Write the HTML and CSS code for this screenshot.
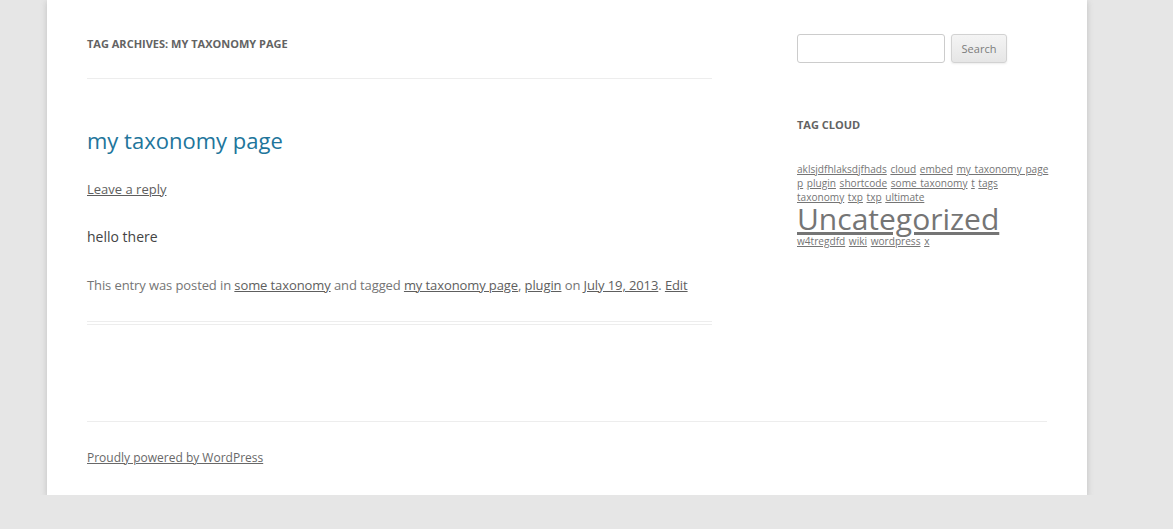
FILE: index.html
```html
<!DOCTYPE html>
<html>
<head>
<meta charset="utf-8">
<link rel="stylesheet" href="styles.css">
</head>
<body>
<div class="site">
  <div class="wrapper">
    <div class="primary">
      <header class="archive-header">
        <h1 class="archive-title">Tag Archives: <span>my taxonomy page</span></h1>
      </header>
      <article class="post">
        <header class="entry-header">
          <h1 class="entry-title"><a href="#">my taxonomy page</a></h1>
          <div class="comments-link"><a href="#">Leave a reply</a></div>
        </header>
        <div class="entry-content">
          <p>hello there</p>
        </div>
        <footer class="entry-meta">This entry was posted in <a href="#">some taxonomy</a> and tagged <a href="#">my taxonomy page</a>, <a href="#">plugin</a> on <a href="#">July 19, 2013</a>. <a href="#">Edit</a></footer>
      </article>
    </div>
    <div class="secondary">
      <aside class="widget widget-search">
        <form class="searchform">
          <input type="text" class="search-input">
          <button type="button" class="search-btn">Search</button>
        </form>
      </aside>
      <aside class="widget widget-tags">
        <h3 class="widget-title">Tag Cloud</h3>
        <div class="tagcloud">
          <a href="#">aklsjdfhlaksdjfhads</a> <a href="#">cloud</a> <a href="#">embed</a> <a href="#">my taxonomy page</a> <a href="#">p</a> <a href="#">plugin</a> <a href="#">shortcode</a> <a href="#">some taxonomy</a> <a href="#">t</a> <a href="#">tags</a><br><a href="#">taxonomy</a> <a href="#">txp</a> <a href="#">txp</a> <a href="#">ultimate</a> <a href="#" class="tag-big">Uncategorized</a> <a href="#">w4tregdfd</a> <a href="#">wiki</a> <a href="#">wordpress</a> <a href="#">x</a>
        </div>
      </aside>
    </div>
  </div>
  <footer class="site-footer">
    <a href="#">Proudly powered by WordPress</a>
  </footer>
</div>
</body>
</html>
```
FILE: styles.css
```css
html, body {
  margin: 0;
  padding: 0;
}
body {
  background: #e6e6e6;
  font-family: "Open Sans", "Liberation Sans", sans-serif;
  font-size: 14px;
  line-height: 24px;
  color: #444;
}
.site {
  margin-left: 47px;
  width: 960px;
  padding: 0 40px;
  background: #fff;
  box-shadow: 0 2px 6px rgba(100, 100, 100, 0.3);
}
.wrapper {
  display: flex;
  justify-content: space-between;
  align-items: flex-start;
}
.primary {
  width: 625px;
  padding-top: 32px;
}
.archive-header {
  margin: 0 0 48px;
  padding-bottom: 22px;
  border-bottom: 1px solid #ededed;
}
.archive-title {
  margin: 0;
  font-size: 11px;
  line-height: 24px;
  font-weight: bold;
  text-transform: uppercase;
  color: #636363;
}
.post {
  padding-bottom: 24px;
  border-bottom: 4px double #ededed;
  margin-bottom: 72px;
}
.entry-header {
  margin-bottom: 24px;
}
.entry-title {
  margin: 0;
  font-size: 22px;
  line-height: 26px;
  font-weight: normal;
}
.entry-title a {
  color: #21759b;
  text-decoration: none;
}
.comments-link {
  margin-top: 24px;
  font-size: 13px;
  line-height: 24px;
  color: #757575;
}
.comments-link a,
.entry-meta a {
  color: #5e5e5e;
  text-decoration: underline;
}
.entry-content p {
  margin: 0 0 24px;
  font-size: 14px;
  line-height: 24px;
  color: #444;
}
.entry-meta {
  font-size: 13px;
  letter-spacing: -0.1px;
  line-height: 24px;
  color: #757575;
}
.secondary {
  width: 250px;
  padding-top: 34px;
}
.widget-search {
  margin-bottom: 50px;
}
.searchform {
  display: flex;
  gap: 6px;
  margin: 0;
}
.search-input {
  box-sizing: border-box;
  width: 148px;
  height: 29px;
  padding: 6px;
  border: 1px solid #ccc;
  border-radius: 3px;
  font-family: inherit;
  font-size: 12px;
  margin: 0;
}
.search-btn {
  box-sizing: border-box;
  width: 56px;
  height: 29px;
  padding: 0;
  font-family: inherit;
  font-size: 11px;
  color: #7c7c7c;
  background: linear-gradient(to bottom, #f4f4f4, #e6e6e6);
  border: 1px solid #d2d2d2;
  border-radius: 3px;
  box-shadow: 0 1px 2px rgba(64, 64, 64, 0.1);
  margin: 0;
}
.widget-title {
  margin: 0 0 25px;
  font-size: 11px;
  line-height: 24px;
  font-weight: bold;
  text-transform: uppercase;
  color: #636363;
}
.tagcloud {
  width: 252px;
  font-size: 10.1px;
  line-height: 14px;
  word-spacing: 1px;
}
.tagcloud a {
  color: #757575;
  text-decoration: underline;
}
.tagcloud .tag-big {
  font-size: 30px;
  line-height: 30px;
}
.site-footer {
  border-top: 1px solid #ededed;
  margin-top: 24px;
  padding: 24px 0 25px;
  font-size: 12px;
  line-height: 24px;
  color: #686868;
}
.site-footer a {
  color: #686868;
  text-decoration: underline;
}
```
